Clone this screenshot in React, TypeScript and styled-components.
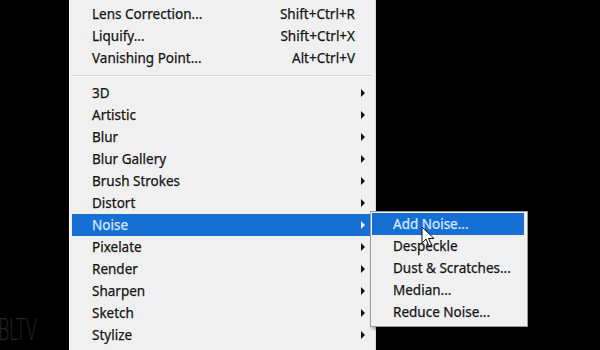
import React from 'react';
import styled, {createGlobalStyle} from "styled-components";

const GlobalSC = createGlobalStyle`
  html, body {
    margin: 0;
    padding: 0;
    background: #000;
  }
`

const StageSC = styled('div')`
  position: relative;
  width: 600px;
  height: 350px;
  overflow: hidden;
  background: #000;
  padding-left: 69px;
  box-sizing: border-box;
  font-family: "Noto Sans", "Open Sans", sans-serif;
  font-size: 13.5px;
`

const MenuSC = styled('div')`
  width: 307px;
  height: 360px;
  box-sizing: border-box;
  background: #f0f0f0;
  border-left: 1px solid #fbfbfb;
  border-right: 1px solid #d8d8d8;
  padding: 3px 3px 0 2px;
  position: relative;
`

const RowSC = styled('div')<{active?: boolean}>`
  position: relative;
  height: 22px;
  display: flex;
  align-items: center;
  padding-left: 20px;
  padding-right: 17px;
  background: ${p => p.active ? '#166fd2' : 'transparent'};
  color: ${p => p.active ? '#d6eaff' : '#151515'};
  -webkit-text-stroke: 0.25px ${p => p.active ? '#d6eaff' : '#151515'};

  .label {
    flex: 1;
    white-space: nowrap;
  }

  .shortcut {
    white-space: nowrap;
  }
`

const ArrowSC = styled('span')<{active?: boolean}>`
  position: absolute;
  right: 7px;
  top: 7px;
  width: 0;
  height: 0;
  border-top: 4px solid transparent;
  border-bottom: 4px solid transparent;
  border-left: 4px solid ${p => p.active ? '#e8f3ff' : '#111'};
`

const SeparatorSC = styled('div')`
  height: 13px;
  display: flex;
  align-items: center;

  &::before {
    content: '';
    flex: 1;
    height: 1px;
    background: #d4d4d4;
    box-shadow: 0 1px 0 #fbfbfb;
  }
`

const SubMenuSC = styled('div')`
  position: absolute;
  left: 298px;
  top: -3px;
  width: 158px;
  box-sizing: border-box;
  background: #f0f0f0;
  border: 1px solid #9c9c9c;
  box-shadow: 2px 2px 3px rgba(0, 0, 0, 0.35);
  padding: 1px 3px 3px 1px;
  z-index: 2;
`

const SubRowSC = styled(RowSC)`
  padding-left: 21px;
  padding-right: 8px;
`

const CursorSC = styled('svg')`
  position: absolute;
  left: 421px;
  top: 226px;
  z-index: 3;
`

const WatermarkSC = styled('div')`
  position: absolute;
  left: -2px;
  bottom: 5px;
  font-family: "DejaVu Sans", sans-serif;
  font-size: 30px;
  line-height: 30px;
  font-weight: 300;
  letter-spacing: -1px;
  color: #262626;
  transform: scaleX(0.58);
  transform-origin: left center;
`

const topItems = [
    {label: 'Lens Correction...', shortcut: 'Shift+Ctrl+R'},
    {label: 'Liquify...', shortcut: 'Shift+Ctrl+X'},
    {label: 'Vanishing Point...', shortcut: 'Alt+Ctrl+V'},
]

const filterGroups = [
    '3D', 'Artistic', 'Blur', 'Blur Gallery', 'Brush Strokes', 'Distort',
    'Noise', 'Pixelate', 'Render', 'Sharpen', 'Sketch', 'Stylize',
]

const noiseItems = ['Add Noise...', 'Despeckle', 'Dust & Scratches...', 'Median...', 'Reduce Noise...']

export default function App() {
    return (
        <StageSC>
            <GlobalSC/>
            <MenuSC>
                {topItems.map(item => (
                    <RowSC key={item.label}>
                        <span className={'label'}>{item.label}</span>
                        <span className={'shortcut'}>{item.shortcut}</span>
                    </RowSC>
                ))}
                <SeparatorSC/>
                {filterGroups.map(name => (
                    <RowSC key={name} active={name === 'Noise'}>
                        <span className={'label'}>{name}</span>
                        <ArrowSC active={name === 'Noise'}/>
                        {name === 'Noise' && (
                            <SubMenuSC>
                                {noiseItems.map((sub, i) => (
                                    <SubRowSC key={sub} active={i === 0}>
                                        <span className={'label'}>{sub}</span>
                                    </SubRowSC>
                                ))}
                            </SubMenuSC>
                        )}
                    </RowSC>
                ))}
            </MenuSC>
            <CursorSC width="14" height="22" viewBox="0 0 14 22">
                <path d="M1 1 L1 17 L5 13 L8 20 L10.5 19 L7.5 12.5 L13 12.5 Z"
                      fill="#fff" stroke="#111" strokeWidth="1" strokeLinejoin="round"/>
            </CursorSC>
            <WatermarkSC>BLTV</WatermarkSC>
        </StageSC>
    );
}
